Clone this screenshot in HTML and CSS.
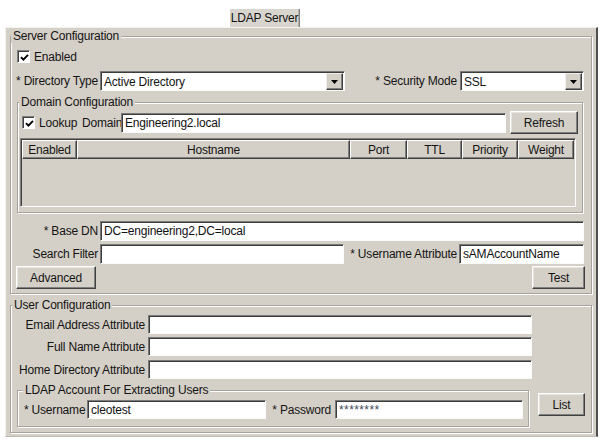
FILE: index.html
```html
<!DOCTYPE html>
<html lang="en">
<head>
<meta charset="utf-8">
<title>LDAP Server</title>
<link rel="stylesheet" href="styles.css">
</head>
<body>
<div class="tabstrip">
  <div class="tab">LDAP Server</div>
</div>
<div class="panel">
  <fieldset class="group server">
    <legend>Server Configuration</legend>
    <div class="row row-enabled">
      <span class="check"><svg width="9" height="9" viewBox="0 0 9 9"><path d="M1 4.2 L3.4 6.6 L8 1.8" fill="none" stroke="#000" stroke-width="1.9"/></svg></span>
      <span class="check-label">Enabled</span>
    </div>
    <div class="row row-dir">
      <span class="label lbl-dir">* Directory Type</span>
      <div class="combo combo-dir"><span class="val">Active Directory</span><span class="arrow"><svg width="7" height="4" viewBox="0 0 7 4"><path d="M0 0 H7 L3.5 4 Z" fill="#000"/></svg></span></div>
      <span class="label lbl-sec">* Security Mode</span>
      <div class="combo combo-sec"><span class="val">SSL</span><span class="arrow"><svg width="7" height="4" viewBox="0 0 7 4"><path d="M0 0 H7 L3.5 4 Z" fill="#000"/></svg></span></div>
    </div>
    <fieldset class="group domain">
      <legend>Domain Configuration</legend>
      <div class="row row-lookup">
        <span class="check"><svg width="9" height="9" viewBox="0 0 9 9"><path d="M1 4.2 L3.4 6.6 L8 1.8" fill="none" stroke="#000" stroke-width="1.9"/></svg></span>
        <span class="lbl-lookup">Lookup</span>
        <span class="lbl-domain">Domain</span>
        <div class="field f-domain">Engineering2.local</div>
        <button class="btn btn-refresh">Refresh</button>
      </div>
      <div class="grid">
        <div class="grid-head">
          <span class="hcell c-enabled">Enabled</span>
          <span class="hcell c-host">Hostname</span>
          <span class="hcell c-port">Port</span>
          <span class="hcell c-ttl">TTL</span>
          <span class="hcell c-prio">Priority</span>
          <span class="hcell c-weight">Weight</span>
        </div>
      </div>
    </fieldset>
    <div class="row row-basedn">
      <span class="label lbl-left">* Base DN</span>
      <div class="field f-basedn">DC=engineering2,DC=local</div>
    </div>
    <div class="row row-search">
      <span class="label lbl-left">Search Filter</span>
      <div class="field f-search"></div>
      <span class="label lbl-uattr">* Username Attribute</span>
      <div class="field f-uattr">sAMAccountName</div>
    </div>
    <div class="row row-buttons">
      <button class="btn btn-adv">Advanced</button>
      <button class="btn btn-test">Test</button>
    </div>
  </fieldset>
  <fieldset class="group user">
    <legend>User Configuration</legend>
    <div class="row row-attr first">
      <span class="label lbl-attr">Email Address Attribute</span>
      <div class="field f-attr"></div>
    </div>
    <div class="row row-attr second">
      <span class="label lbl-attr">Full Name Attribute</span>
      <div class="field f-attr"></div>
    </div>
    <div class="row row-attr third">
      <span class="label lbl-attr">Home Directory Attribute</span>
      <div class="field f-attr"></div>
    </div>
    <div class="account-row">
      <fieldset class="group account">
        <legend>LDAP Account For Extracting Users</legend>
        <div class="row row-account">
          <span class="label lbl-user">* Username</span>
          <div class="field f-user">cleotest</div>
          <span class="label lbl-pass">* Password</span>
          <div class="field f-pass">********</div>
        </div>
      </fieldset>
      <button class="btn btn-list">List</button>
    </div>
  </fieldset>
</div>
</body>
</html>
```
FILE: styles.css
```css
* { box-sizing: border-box; }

body {
  margin: 0;
  background: #fff;
  font-family: "Liberation Sans", Arial, sans-serif;
  font-size: 12px;
  letter-spacing: -0.2px;
  color: #141414;
}

.tabstrip {
  height: 27px;
  padding: 8px 0 0 229px;
}

.tab {
  width: 71px;
  height: 19px;
  background: #d8d5ce;
  border-top: 1px solid #fff;
  border-left: 1px solid #fff;
  border-right: 1px solid #808080;
  border-radius: 2px 2px 0 0;
  box-shadow: inset -1px 0 0 #b4b1aa;
  display: flex;
  align-items: center;
  justify-content: center;
}

.panel {
  margin-left: 5px;
  width: 593px;
  background: #d4d0c8;
  border-top: 1px solid #f4f3f0;
  border-left: 1px solid #f4f3f0;
  border-right: 2px solid #505050;
  border-bottom: 1px solid #bdbab3;
  padding: 1px 4px 3px 4px;
}

.group {
  margin: 0;
  padding: 0;
  min-width: 0;
  border: 1px solid #a6a39c;
  box-shadow: inset 1px 1px 0 #fff, 1px 1px 0 #fff;
}

.group > legend {
  padding: 0 2px;
  line-height: 14px;
  background: #d4d0c8;
}

.row {
  display: flex;
  align-items: center;
}

/* ---------- form primitives ---------- */
.field {
  height: 20px;
  background: #fff;
  border: 1px solid;
  border-color: #7a7a7a #fbfbfb #fbfbfb #7a7a7a;
  box-shadow: inset 1px 1px 0 #3c3c3c;
  padding-left: 3px;
  display: flex;
  align-items: center;
  white-space: nowrap;
  overflow: hidden;
  color: #111;
}

.btn {
  height: 23px;
  padding: 0;
  font: inherit;
  letter-spacing: inherit;
  color: inherit;
  background: #d4d0c8;
  border: 1px solid;
  border-color: #fff #404040 #404040 #fff;
  box-shadow: inset -1px -1px 0 #808080, inset 1px 1px 0 #e6e4df;
  display: flex;
  align-items: center;
  justify-content: center;
}

.check {
  width: 13px;
  height: 13px;
  flex: none;
  background: #fff;
  border: 1px solid;
  border-color: #808080 #fff #fff #808080;
  box-shadow: inset 1px 1px 0 #404040;
  display: flex;
  align-items: center;
  justify-content: center;
  padding: 1px 0 0 1px;
}

.combo {
  height: 20px;
  background: #fff;
  border: 1px solid;
  border-color: #7a7a7a #fbfbfb #fbfbfb #7a7a7a;
  box-shadow: inset 1px 1px 0 #3c3c3c;
  display: flex;
  align-items: center;
  padding: 1px 1px 0 1px;
}

.combo .val {
  flex: 1;
  padding-left: 2px;
  white-space: nowrap;
}

.combo .arrow {
  width: 17px;
  height: 17px;
  background: #d4d0c8;
  border: 1px solid;
  border-color: #f0efec #404040 #404040 #f0efec;
  box-shadow: inset -1px -1px 0 #808080;
  display: flex;
  align-items: center;
  justify-content: center;
}

.label {
  white-space: nowrap;
  flex: none;
}

/* ---------- server configuration ---------- */
.row-enabled {
  margin-top: 7px;
  height: 13px;
  padding-left: 6px;
}

.check-label { margin-left: 4px; }

.row-dir {
  margin-top: 8px;
  height: 20px;
}

.lbl-dir {
  width: 87px;
  text-align: right;
  margin-right: 2px;
}

.combo-dir { width: 245px; }

.lbl-sec {
  width: 112px;
  text-align: right;
  margin-right: 3px;
}

.combo-sec { width: 124px; }

.domain {
  margin: 4px 8px 0 6px;
  padding-bottom: 5px;
}

.domain > legend { margin-left: 1px; }

.row-lookup {
  margin-top: 2px;
  height: 23px;
  padding-left: 4px;
}

.lbl-lookup {
  width: 43px;
  margin-left: 4px;
}

.lbl-domain {
  width: 37px;
  margin-right: 2px;
}

.f-domain { width: 385px; height: 20px; }

.btn-refresh {
  width: 68px;
  margin-left: 4px;
}

.grid {
  margin: 4px 0 0 2px;
  width: 556px;
  height: 69px;
  border: 1px solid;
  border-color: #808080 #fff #fff #808080;
  box-shadow: inset 1px 1px 0 #404040;
  padding: 1px 1px 0 1px;
}

.grid-head {
  display: flex;
  height: 19px;
}

.hcell {
  height: 19px;
  border: 1px solid;
  border-color: #fff #404040 #404040 #fff;
  box-shadow: inset -1px -1px 0 #808080;
  display: flex;
  align-items: center;
  justify-content: center;
  flex: none;
}

.c-enabled { width: 55px; }
.c-host { width: 273px; }
.c-port { width: 57px; }
.c-ttl { width: 55px; }
.c-prio { width: 56px; }
.c-weight { width: 56px; }

.row-basedn {
  margin-top: 8px;
  height: 20px;
}

.lbl-left {
  width: 87px;
  text-align: right;
  margin-right: 2px;
}

.f-basedn { width: 484px; }

.row-search {
  margin-top: 3px;
  height: 20px;
}

.f-search { width: 244px; }

.lbl-uattr {
  width: 113px;
  text-align: right;
  margin-right: 2px;
}

.f-uattr { width: 125px; }

.row-buttons {
  margin-top: 2px;
  height: 23px;
  padding: 0 6px 0 5px;
}

.btn-adv { width: 80px; }

.btn-test {
  width: 53px;
  margin-left: auto;
}

.server { padding-bottom: 4px; }

/* ---------- user configuration ---------- */
.user {
  margin-top: 4px;
  padding-bottom: 5px;
}

.user > legend { margin-left: 1px; }

.row-attr { height: 19px; }
.row-attr.first { margin-top: 3px; }
.row-attr.second { margin-top: 3px; }
.row-attr.third { margin-top: 4px; }

.lbl-attr {
  width: 134px;
  text-align: right;
  margin-right: 3px;
}

.f-attr { width: 384px; height: 19px; }

.account-row {
  display: flex;
  align-items: flex-start;
  margin-top: 4px;
}

.account {
  margin-left: 6px;
  width: 512px;
  padding-bottom: 7px;
}

.account > legend { margin-left: 5px; }

.row-account {
  margin-top: 3px;
  height: 19px;
}

.lbl-user {
  width: 69px;
  padding-left: 6px;
}

.f-user { width: 179px; height: 19px; }

.lbl-pass {
  width: 69px;
  text-align: right;
  padding-right: 4px;
}

.f-pass { width: 188px; height: 19px; color: #3e4a58; letter-spacing: 0.4px; }

.btn-list {
  width: 47px;
  margin: 10px 0 0 9px;
}
```
